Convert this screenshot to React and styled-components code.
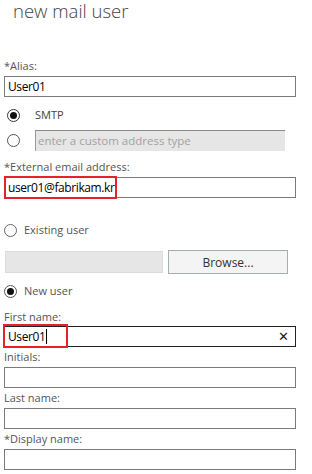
import React from 'react';
import styled, { createGlobalStyle } from 'styled-components';

const Global = createGlobalStyle`
  html, body { margin: 0; padding: 0; background: #fff; }
  body { font-family: "Open Sans", "Noto Sans", sans-serif; }
  * { box-sizing: border-box; }
`;

const Page = styled.div`
  width: 312px;
  height: 474px;
  overflow: hidden;
  padding: 0 16px 0 4px;
  display: flex;
  flex-direction: column;
`;

const Title = styled.h1`
  margin: 0 0 0 9px;
  height: 22px;
  font-size: 18.5px;
  line-height: 22px;
  font-weight: 300;
  color: #444;
`;

const Group = styled.div`
  display: flex;
  flex-direction: column;
  gap: ${p => p.$gap ?? 2}px;
  margin-top: ${p => p.$mt ?? 1}px;
`;

const Label = styled.div`
  height: 17px;
  font-size: 11px;
  line-height: 17px;
  color: #555;
  white-space: nowrap;
`;

const FieldWrap = styled.div`
  position: relative;
`;

const Field = styled.div`
  height: ${p => p.$h ?? 21}px;
  border: 1px solid ${p => (p.$focus ? '#222' : '#7a7a7a')};
  padding: 0 2px 0 3px;
  font-size: 12px;
  letter-spacing: -0.4px;
  line-height: ${p => (p.$h ?? 21) - 2}px;
  color: #000;
  display: flex;
  align-items: center;
  white-space: nowrap;
`;

const Highlight = styled.div`
  position: absolute;
  left: ${p => p.$left}px;
  top: ${p => p.$top}px;
  width: ${p => p.$w}px;
  height: ${p => p.$h}px;
  border: 2px solid #e3222c;
  pointer-events: none;
`;

const Caret = styled.span`
  display: inline-block;
  width: 1px;
  height: 15px;
  background: #000;
  margin-left: 1px;
`;

const Clear = styled.span`
  margin-left: auto;
  margin-right: 4px;
  font-size: 13px;
  color: #222;
  line-height: 1;
`;

const Row = styled.div`
  display: flex;
  align-items: center;
  height: ${p => p.$h ?? 18}px;
  margin-top: ${p => p.$mt ?? 0}px;
  gap: ${p => p.$gap ?? 15}px;
  padding-left: ${p => p.$indent ?? 3}px;
`;

const Radio = styled.span`
  position: relative;
  flex: none;
  width: 13px;
  height: 13px;
  border-radius: 50%;
  border: 1px solid ${p => p.$tone};
  background: #fff;
  &::after {
    content: '';
    display: ${p => (p.$checked ? 'block' : 'none')};
    position: absolute;
    left: 2px;
    top: 2px;
    width: 7px;
    height: 7px;
    border-radius: 50%;
    background: #111;
  }
`;

const RadioText = styled.span`
  font-size: ${p => p.$size ?? 11}px;
  color: ${p => p.$color ?? '#444'};
  line-height: 18px;
`;

const DisabledBox = styled.div`
  width: 250px;
  height: 21px;
  background: #e6e6e6;
  border-top: 1px solid #8a8a8a;
  border-left: 1px solid #9a9a9a;
  padding-left: 2px;
  font-size: 11.5px;
  line-height: 19px;
  color: #a2a2a2;
  white-space: nowrap;
`;

const PickerRow = styled.div`
  display: flex;
  align-items: center;
  gap: 5px;
  height: 24px;
  margin-top: 11px;
  padding-left: 1px;
`;

const GrayBox = styled.div`
  width: 158px;
  height: 22px;
  background: #e6e6e6;
  border: 1px solid #dcdcdc;
`;

const BrowseButton = styled.button`
  width: 120px;
  height: 24px;
  background: #f4f4f4;
  border: 1px solid #a4b0b0;
  border-radius: 0;
  font-family: inherit;
  font-size: 12px;
  color: #333;
  padding: 0;
`;

export default function App() {
  return (
    <>
      <Global />
      <Page>
        <Title>new mail user</Title>

        <Group $mt={35}>
          <Label>*Alias:</Label>
          <Field>User01</Field>
        </Group>

        <Row $mt={9}>
          <Radio $checked $tone="#333" />
          <RadioText $color="#444">SMTP</RadioText>
        </Row>

        <Row $mt={6} $h={21}>
          <Radio $tone="#555" />
          <DisabledBox>enter a custom address type</DisabledBox>
        </Row>

        <Group $mt={7}>
          <Label>*External email address:</Label>
          <FieldWrap>
            <Field>user01@fabrikam.kr</Field>
            <Highlight $left={0} $top={-1} $w={113} $h={23} />
          </FieldWrap>
        </Group>

        <Row $mt={23} $indent={0} $gap={7}>
          <Radio $tone="#666" />
          <RadioText $size={11} $color="#555">Existing user</RadioText>
        </Row>

        <PickerRow>
          <GrayBox />
          <BrowseButton type="button">Browse...</BrowseButton>
        </PickerRow>

        <Row $mt={8} $indent={0} $gap={7}>
          <Radio $checked $tone="#555" />
          <RadioText $size={11} $color="#555">New user</RadioText>
        </Row>

        <Group $mt={8} $gap={1}>
          <Label>First name:</Label>
          <FieldWrap>
            <Field $focus>
              User01<Caret />
              <Clear>✕</Clear>
            </Field>
            <Highlight $left={-1} $top={-2} $w={65} $h={24} />
          </FieldWrap>
        </Group>

        <Group>
          <Label>Initials:</Label>
          <Field />
        </Group>

        <Group>
          <Label>Last name:</Label>
          <Field />
        </Group>

        <Group>
          <Label>*Display name:</Label>
          <Field />
        </Group>
      </Page>
    </>
  );
}
